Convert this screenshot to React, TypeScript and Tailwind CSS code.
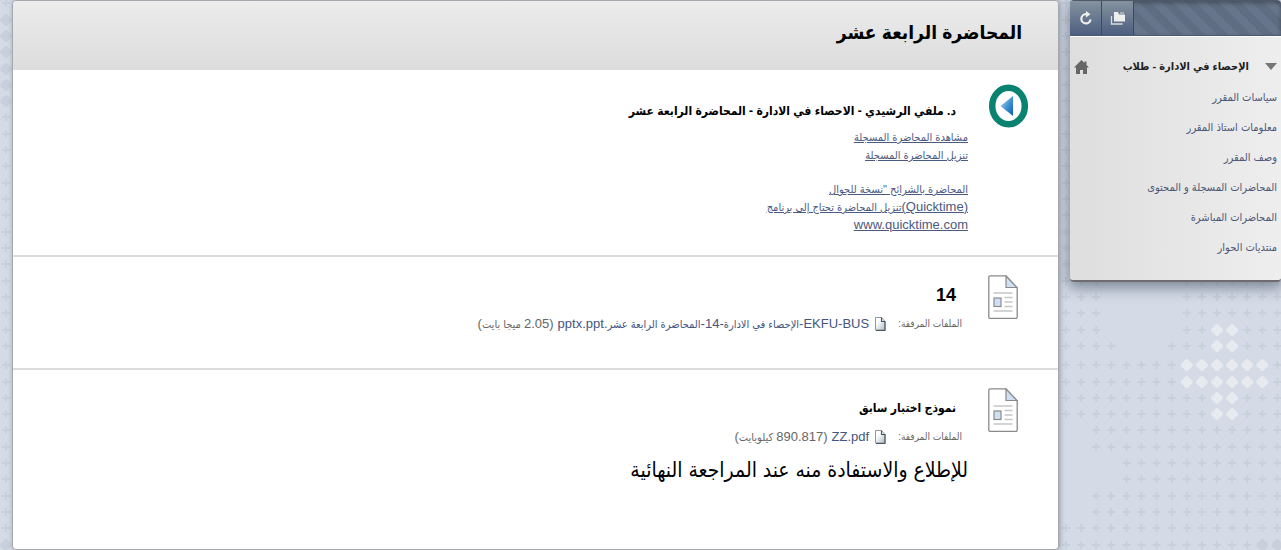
import type { ReactNode } from 'react';

// decorative cross grid behind the panels, one string per row
const ROWS: [number, string][] = [
  [281, '+++.....+++++++'],
  [297, '+++.....+++++++'],
  [313, '+++.....+++++++'],
  [330, '+++.....++oo+++'],
  [346, '++++...+++oo+++'],
  [365, '++++++++oooooo+'],
  [382, '++++++++oooooo+'],
  [398, '++++++++++oo+++'],
  [414, '++++++++++oo+++'],
  [430, '..+++++++++++++'],
  [447, '..+++++++++++++'],
  [463, '....+++++++++++'],
  [479, '....+++++++++++'],
  [496, '..+++++++++++++'],
  [512, '..+++++++++++++'],
  [528, '+++++++++++++++'],
  [545, '+++++++++++++dd'],
];

const UPPER_ROWS = [3, 20, 36, 52, 69, 85, 101, 117, 134, 150, 166, 183, 199, 215, 232, 248, 264];

const plus = 'M-1 -4h2v3h3v2h-3v3h-2v-3h-3v-2h3z';
const diamond =
  'M0 -6Q2 -6 3 -3.500Q6 -2 6 0Q6 2 3 3.500Q2 6 0 6Q-2 6 -3 3.500Q-6 2 -6 0Q-6 -2 -3 -3.500Q-2 -6 0 -6z';

const Pattern = () => (
  <>
    <svg className="absolute left-0 top-0" width="12" height="550" aria-hidden="true">
      {[...UPPER_ROWS, ...ROWS.map(([y]) => y)].map((y) => (
        <path
          key={y}
          d={(y > 3 && y < 110) || y === 545 ? diamond : plus}
          transform={`translate(6 ${y})`}
          fill="#c8d0dc"
        />
      ))}
    </svg>
    <svg className="absolute right-0 top-0" width="222" height="550" aria-hidden="true">
      {UPPER_ROWS.map((y) => (
        <path key={y} d={plus} transform={`translate(7 ${y})`} fill="#c8d0dc" />
      ))}
      {ROWS.map(([y, row]) =>
        row.split('').map((c, i) =>
          c === '.' ? null : (
            <path
              key={`${y}-${i}`}
              d={c === '+' ? plus : diamond}
              transform={`translate(${7 + i * 15.1} ${y})`}
              fill={c === 'o' ? '#e7ebf0' : '#c8d0dc'}
            />
          )
        )
      )}
    </svg>
  </>
);

const DocIcon = () => (
  <svg width="30" height="44" viewBox="0 0 30 44" fill="none" aria-hidden="true">
    <path d="M2 .8h16L29.2 13v29a1.5 1.5 0 0 1-1.5 1.5H2A1.5 1.5 0 0 1 .8 42V2A1.3 1.3 0 0 1 2 .8z" fill="#fff" stroke="#8a8a8a" strokeWidth="1.3" />
    <path d="M18 1v11.5h11z" fill="#cfe0f5" stroke="#8a8a8a" strokeWidth="1.2" />
    <path d="M5.500 18h19M16.500 22.500h8M16.500 27h8M16.500 31.500h8M5.500 36h19" stroke="#c6c6c6" strokeWidth="1.3" />
    <rect x="6" y="23" width="7" height="8.500" fill="#cfe0f5" stroke="#8a8a8a" strokeWidth="1.2" />
  </svg>
);

const FileIcon = () => (
  <svg className="shrink-0" width="11" height="14" viewBox="0 0 11 14" aria-hidden="true">
    <defs>
      <linearGradient id="file" x1="0" y1="0" x2="1" y2="1">
        <stop offset=".3" stopColor="#fff" />
        <stop offset="1" stopColor="#a9bcc4" />
      </linearGradient>
    </defs>
    <path d="M.5.5h6l3.500 4v8.500H.5z" fill="url(#file)" stroke="#8d989e" />
    <path d="M6.500.5v4H10v9H1" fill="none" stroke="#4c565c" strokeWidth="1.1" />
  </svg>
);

const PlayIcon = () => (
  <svg width="40" height="44" viewBox="0 0 40 44" aria-hidden="true">
    <defs>
      <linearGradient id="play" x1="0" y1="0" x2="1" y2="1">
        <stop offset="0" stopColor="#c5dff5" />
        <stop offset=".55" stopColor="#3c90d4" />
        <stop offset="1" stopColor="#0d5cab" />
      </linearGradient>
    </defs>
    <ellipse cx="20.500" cy="22" rx="16.300" ry="18.300" fill="#fff" stroke="#0a8270" strokeWidth="6.500" />
    <path d="M12.500 22 25 12v20z" fill="url(#play)" />
  </svg>
);

const Latin = ({ children }: { children: ReactNode }) => <span className="text-[13px]">{children}</span>;

const Attachment = ({ name, size }: { name: ReactNode; size: ReactNode }) => (
  <div className="flex h-[18px] items-center pr-1.5 text-[11px] leading-[18px] text-[#666]">
    <span className="text-[10px]">الملفات المرفقة:</span>
    <a href="#file" className="mr-3 flex items-center gap-1.5 text-[#44557e]">
      <FileIcon />
      <span>{name}</span>
    </a>
    <span className="mr-1">{size}</span>
  </div>
);

const menu = [
  'سياسات المقرر',
  'معلومات استاذ المقرر',
  'وصف المقرر',
  'المحاضرات المسجلة و المحتوى',
  'المحاضرات المباشرة',
  'منتديات الحوار',
];

const Sidebar = () => (
  <aside className="w-[211px] shrink-0 self-start overflow-hidden rounded border-b-2 border-[#6d6d6f] bg-linear-to-l from-[#eeeeee] to-[#dedede] shadow-[0_4px_14px_2px_rgba(70,80,100,0.6)]">
    <div dir="ltr" className="flex h-9 border-t border-b border-t-[#4d5868] border-b-[#4b5a74] bg-[repeating-linear-gradient(45deg,#66758b_0_8px,#5f6d82_8px_16px)] shadow-[inset_0_2px_4px_rgba(0,0,0,0.3)]">
      <button aria-label="تحديث" className="flex w-8 items-center justify-center border-r border-[#3f4a5f] bg-linear-to-b from-[#85939e] to-[#4d5e80]">
        <svg width="14" height="14" viewBox="0 0 14 14" fill="none">
          <path d="M11.500 8.300A4.600 4.600 0 1 1 7 3.200h1.500" stroke="#eee" strokeWidth="2.200" />
          <path d="M7 0v6.500L11.500 3.300z" fill="#eee" />
        </svg>
      </button>
      <button aria-label="عرض المجلدات" className="flex w-8 items-center justify-center border-r border-[#3f4a5f] bg-linear-to-b from-[#85939e] to-[#4d5e80]">
        <svg width="16" height="15" viewBox="0 0 16 15">
          <path d="M4 1h4l1 2.500h6V10.500H4z" fill="#eee" />
          <path d="M10 2h4" stroke="#ddd" strokeWidth="1" />
          <path d="M1.500 5v8h11" fill="none" stroke="#ddd" strokeWidth="1.300" />
        </svg>
      </button>
    </div>
    <div className="border-t border-white pb-[18px] pt-[14px]">
      <div className="flex h-[31px] items-center px-1">
        <svg width="12" height="7" viewBox="0 0 12 7" aria-hidden="true">
          <path d="M0 0h12L6 7z" fill="#777" />
        </svg>
        <h2 className="mr-4 text-[11px] font-bold text-[#222]">الإحصاء في الادارة - طلاب</h2>
        <a href="#home" aria-label="الصفحة الرئيسية" className="mr-auto">
          <svg width="15" height="14" viewBox="0 0 15 14">
            <path d="M7.500 0 0 7.500h2V14h4v-4h3v4h4V7.500h2L12.500 5V1.500h-2V3z" fill="#666" />
          </svg>
        </a>
      </div>
      <nav>
        <ul>
          {menu.map((item) => (
            <li key={item} className="flex h-[30px] items-center pr-1 text-[11px]">
              <a href="#menu" className="text-[#4d5878]">{item}</a>
            </li>
          ))}
        </ul>
      </nav>
    </div>
  </aside>
);

const App = () => (
  <div
    dir="rtl"
    className="relative flex min-h-screen overflow-hidden bg-[#d4dbe6] font-['Liberation_Sans','DejaVu_Sans_Condensed','DejaVu_Sans',sans-serif]"
  >
    <Pattern />
    <div className="relative z-10 flex w-full items-stretch gap-[11px] pl-3">
      <Sidebar />
      <main className="min-w-0 flex-1 rounded border border-[#a5a8ad] bg-white shadow-[1px_0_5px_rgba(100,110,130,0.6)]">
        <header className="flex h-[70px] items-center rounded-t border-b border-white bg-linear-to-b from-[#ececec] to-[#dcdcdc] pr-9 pb-1">
          <h1 className="text-[19px] font-bold text-black">المحاضرة الرابعة عشر</h1>
        </header>

        <section className="flex h-[186px] border-b-2 border-[#dcdcdc] pr-[30px] pt-[13px]">
          <PlayIcon />
          <div className="mr-5">
            <h3 className="flex h-11 items-end pb-2 pr-3 text-[12px] font-bold text-black">
              د. ملفي الرشيدي - الاحصاء في الادارة - المحاضرة الرابعة عشر
            </h3>
            <div className="flex flex-col items-start text-[11px] leading-[18px] text-[#4b5a80] underline">
              <a href="#watch">مشاهدة المحاضرة المسجلة</a>
              <a href="#download" className="mb-4">تنزيل المحاضرة المسجلة</a>
              <a href="#mobile">المحاضرة بالشرائح "نسخة للجوال</a>
              <a href="#program"><Latin>(Quicktime)</Latin>تنزيل المحاضرة تحتاج إلى برنامج</a>
              <a href="#quicktime"><Latin>www.quicktime.com</Latin></a>
            </div>
          </div>
        </section>

        <section className="flex h-[113px] border-b-2 border-[#dcdcdc] pr-10 pt-[18px]">
          <DocIcon />
          <div className="mr-5">
            <h3 className="flex h-10 items-center pr-3 text-lg font-bold text-black">14</h3>
            <Attachment
              name={<><Latin>EKFU-BUS-</Latin>الإحصاء في الادارة<Latin>-14-</Latin>المحاضرة الرابعة عشر<Latin>.pptx.ppt</Latin></>}
              size={<><Latin>(2.05</Latin> ميجا بايت<Latin>)</Latin></>}
            />
          </div>
        </section>

        <section className="flex h-[179px] pr-10 pt-[18px]">
          <DocIcon />
          <div className="mr-5">
            <h3 className="flex h-10 items-center pr-3 text-[12px] font-bold text-black">نموذج اختبار سابق</h3>
            <Attachment name={<Latin>ZZ.pdf</Latin>} size={<><Latin>(890.817</Latin> كيلوبايت<Latin>)</Latin></>} />
            <p className="mt-2 text-[21px] text-black">للإطلاع والاستفادة منه عند المراجعة النهائية</p>
          </div>
        </section>
      </main>
    </div>
  </div>
);

export default App;
